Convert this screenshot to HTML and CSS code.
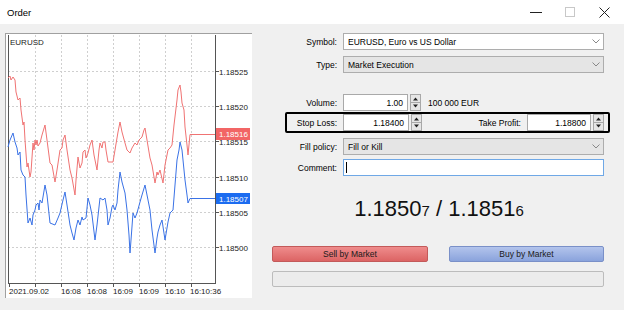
FILE: index.html
```html
<!DOCTYPE html>
<html lang="en">
<head>
    <meta charset="UTF-8">
    <title>Order</title>
    <link rel="stylesheet" href="styles.css">
</head>
<body>
    <div class="window">
        <div class="titlebar">
            <span class="title">Order</span>
            <div class="controls">
                <div class="ctl"><svg width="12" height="10" viewBox="0 0 12 10"><line x1="0" y1="5.5" x2="12" y2="5.5" stroke="#222" stroke-width="1"/></svg></div>
                <div class="ctl"><svg width="10" height="10" viewBox="0 0 10 10"><rect x="0.5" y="0.5" width="9" height="9" fill="none" stroke="#c8c8c8"/></svg></div>
                <div class="ctl"><svg width="11" height="11" viewBox="0 0 11 11"><path d="M0.5 0.5 L10.5 10.5 M10.5 0.5 L0.5 10.5" stroke="#222" stroke-width="1"/></svg></div>
            </div>
        </div>

        <div class="content">
            <!-- price chart -->
            <div class="chart">
                <svg width="246" height="264" viewBox="6 34 246 264">
                    <rect x="6" y="34" width="246" height="264" fill="#fff"/>
                    <g stroke="#cfcfcf" stroke-width="1" stroke-dasharray="2,2">
                        <line x1="35.5" y1="35" x2="35.5" y2="283"/>
                        <line x1="61.5" y1="35" x2="61.5" y2="283"/>
                        <line x1="87.5" y1="35" x2="87.5" y2="283"/>
                        <line x1="113.5" y1="35" x2="113.5" y2="283"/>
                        <line x1="139.5" y1="35" x2="139.5" y2="283"/>
                        <line x1="165.5" y1="35" x2="165.5" y2="283"/>
                        <line x1="191.5" y1="35" x2="191.5" y2="283"/>
                        <line x1="8" y1="71.5" x2="215" y2="71.5"/>
                        <line x1="8" y1="106.5" x2="215" y2="106.5"/>
                        <line x1="8" y1="141.5" x2="215" y2="141.5"/>
                        <line x1="8" y1="177.5" x2="215" y2="177.5"/>
                        <line x1="8" y1="212.5" x2="215" y2="212.5"/>
                        <line x1="8" y1="247.5" x2="215" y2="247.5"/>
                    </g>
                    <g stroke="#555" stroke-width="1">
                        <line x1="8.5" y1="35" x2="8.5" y2="284"/>
                        <line x1="215.5" y1="35" x2="215.5" y2="284"/>
                        <line x1="8" y1="283.5" x2="216" y2="283.5"/>
                        <line x1="9.5" y1="283" x2="9.5" y2="287"/>
                        <line x1="35.5" y1="283" x2="35.5" y2="287"/>
                        <line x1="61.5" y1="283" x2="61.5" y2="287"/>
                        <line x1="87.5" y1="283" x2="87.5" y2="287"/>
                        <line x1="113.5" y1="283" x2="113.5" y2="287"/>
                        <line x1="139.5" y1="283" x2="139.5" y2="287"/>
                        <line x1="165.5" y1="283" x2="165.5" y2="287"/>
                        <line x1="191.5" y1="283" x2="191.5" y2="287"/>
                        <line x1="215" y1="71.5" x2="219" y2="71.5"/>
                        <line x1="215" y1="106.5" x2="219" y2="106.5"/>
                        <line x1="215" y1="141.5" x2="219" y2="141.5"/>
                        <line x1="215" y1="177.5" x2="219" y2="177.5"/>
                        <line x1="215" y1="212.5" x2="219" y2="212.5"/>
                        <line x1="215" y1="247.5" x2="219" y2="247.5"/>
                    </g>
                    <polyline fill="none" stroke="#f07373" stroke-width="1" points="8,78 10,76 11,80 13,77 15,80 16,92 18,100 20,98 21,110 23,125 24,122 25,140 27,167 28,163 30,177 31,172 33,143 34,150 35,140 36,145 37,140 38,146 40,143 42,135 45,125 47,140 50,163 52,165 55,182 57,170 60,150 62,148 63,140 65,135 67,150 70,170 72,178 75,195 76,180 78,157 80,168 82,163 83,152 85,150 86,158 88,153 90,145 92,140 94,155 97,170 99,150 100,143 102,148 103,142 105,142 106,150 108,162 113,162 115,150 118,132 120,122 122,132 125,143 127,150 130,153 132,148 135,143 137,145 139,140 142,137 144,130 145,128 147,140 150,158 152,165 155,183 157,172 158,175 160,170 163,183 165,165 168,150 170,148 172,145 174,125 177,100 178,90 180,85 181,92 182,103 184,110 185,127 187,145 188,155 190,134.5 215,134.5"/>
                    <polyline fill="none" stroke="#3a72e6" stroke-width="1" points="8,147 10,140 13,133 15,142 17,148 18,155 20,152 21,170 23,175 25,177 26,195 28,223 30,218 32,225 33,215 35,210 36,205 38,203 39,210 40,200 42,203 45,185 47,195 50,223 55,225 58,218 60,213 63,200 65,192 67,205 70,225 72,233 74,240 76,228 78,220 80,225 82,217 83,220 86,218 88,198 90,205 92,215 95,240 97,225 100,198 103,200 105,198 107,210 108,225 110,218 112,207 113,205 115,210 117,203 118,190 120,172 122,182 125,193 127,210 129,235 130,253 131,240 133,213 135,218 137,213 140,202 142,195 145,185 148,200 150,210 152,230 155,253 157,238 158,232 160,225 162,220 165,240 168,222 170,213 173,210 175,185 177,160 179,150 180,142 182,150 184,170 185,180 187,195 188,203 190,198.5 215,198.5"/>
                    <g class="axis-text">
                        <text x="10" y="45">EURUSD</text>
                        <text x="219" y="74.5">1.18525</text>
                        <text x="219" y="109.5">1.18520</text>
                        <text x="219" y="144.5">1.18515</text>
                        <text x="219" y="180.5">1.18510</text>
                        <text x="219" y="215.5">1.18505</text>
                        <text x="219" y="250.5">1.18500</text>
                        <text x="9" y="294">2021.09.02</text>
                        <text x="61" y="294">16:08</text>
                        <text x="87" y="294">16:08</text>
                        <text x="113" y="294">16:09</text>
                        <text x="139" y="294">16:09</text>
                        <text x="165" y="294">16:10</text>
                        <text x="190" y="294">16:10:36</text>
                    </g>
                    <rect x="216" y="128" width="34" height="12" fill="#f26565"/>
                    <text class="tag" x="219" y="137">1.18516</text>
                    <rect x="216" y="193" width="34" height="11" fill="#1c6cf0"/>
                    <text class="tag" x="219" y="201.5">1.18507</text>
                </svg>
            </div>

            <!-- order form -->
            <div class="form">
                <div class="row row-symbol">
                    <label class="lbl">Symbol:</label>
                    <div class="combo">
                        <span>EURUSD, Euro vs US Dollar</span>
                        <svg class="chev" width="8" height="5" viewBox="0 0 8 5"><polyline points="0.5,0.5 4,4 7.5,0.5" fill="none" stroke="#888"/></svg>
                    </div>
                </div>
                <div class="row row-type">
                    <label class="lbl">Type:</label>
                    <div class="combo grey">
                        <span>Market Execution</span>
                        <svg class="chev" width="8" height="5" viewBox="0 0 8 5"><polyline points="0.5,0.5 4,4 7.5,0.5" fill="none" stroke="#888"/></svg>
                    </div>
                </div>
                <div class="row row-volume">
                    <label class="lbl">Volume:</label>
                    <div class="edit vol">1.00</div>
                    <svg class="spin" width="11" height="17" viewBox="0 0 11 17"><rect x="0.5" y="0.5" width="10" height="16" fill="#e6e6e6" stroke="#a8a8a8"/><line x1="1" y1="8.5" x2="10" y2="8.5" stroke="#a8a8a8"/><path d="M3 6.5 L5.5 3.5 L8 6.5 Z M3 10.5 L5.5 13.5 L8 10.5 Z" fill="#222"/></svg>
                    <span class="unit">100 000 EUR</span>
                </div>
                <div class="row row-stops">
                    <label class="lbl sl">Stop Loss:</label>
                    <div class="edit sl-edit">1.18400</div>
                    <svg class="spin" width="11" height="17" viewBox="0 0 11 17"><rect x="0.5" y="0.5" width="10" height="16" fill="#e6e6e6" stroke="#a8a8a8"/><line x1="1" y1="8.5" x2="10" y2="8.5" stroke="#a8a8a8"/><path d="M3 6.5 L5.5 3.5 L8 6.5 Z M3 10.5 L5.5 13.5 L8 10.5 Z" fill="#222"/></svg>
                    <label class="lbl tp">Take Profit:</label>
                    <div class="edit tp-edit">1.18800</div>
                    <svg class="spin" width="11" height="17" viewBox="0 0 11 17"><rect x="0.5" y="0.5" width="10" height="16" fill="#e6e6e6" stroke="#a8a8a8"/><line x1="1" y1="8.5" x2="10" y2="8.5" stroke="#a8a8a8"/><path d="M3 6.5 L5.5 3.5 L8 6.5 Z M3 10.5 L5.5 13.5 L8 10.5 Z" fill="#222"/></svg>
                </div>
                <div class="row row-fill">
                    <label class="lbl">Fill policy:</label>
                    <div class="combo grey">
                        <span>Fill or Kill</span>
                        <svg class="chev" width="8" height="5" viewBox="0 0 8 5"><polyline points="0.5,0.5 4,4 7.5,0.5" fill="none" stroke="#888"/></svg>
                    </div>
                </div>
                <div class="row row-comment">
                    <label class="lbl">Comment:</label>
                    <div class="edit comment"><span class="caret"></span></div>
                </div>

                <div class="price">1.1850<small>7</small> / 1.1851<small>6</small></div>

                <div class="actions">
                    <button class="btn sell">Sell by Market</button>
                    <button class="btn buy">Buy by Market</button>
                </div>
                <div class="progress"></div>
            </div>
        </div>
    </div>
</body>
</html>
```

FILE: styles.css
```css
* {
    margin: 0;
    padding: 0;
    box-sizing: border-box;
}

body {
    width: 624px;
    height: 310px;
    overflow: hidden;
    background: #f0f0f0;
    font-family: 'Liberation Sans', Arial, sans-serif;
    font-size: 8.5px;
    color: #000;
}

.window {
    width: 624px;
    height: 310px;
}

/* title bar */
.titlebar {
    height: 24px;
    background: #fff;
    display: flex;
    align-items: center;
}

.title {
    font-size: 9.5px;
    margin-left: 7px;
}

.controls {
    margin-left: auto;
    margin-right: 3px;
    display: flex;
}

.ctl {
    width: 34px;
    height: 24px;
    display: flex;
    align-items: center;
    justify-content: center;
}

/* main area */
.content {
    display: flex;
    padding-top: 9px;
}

.chart {
    margin-left: 5px;
    width: 247px;
    height: 265px;
    border-top: 1px solid #a0a0a0;
    border-left: 1px solid #a0a0a0;
}

.chart svg {
    display: block;
}

.axis-text text {
    font-family: 'Liberation Sans', Arial, sans-serif;
    font-size: 8px;
    fill: #1a1a1a;
}

.tag {
    font-family: 'Liberation Sans', Arial, sans-serif;
    font-size: 8px;
    fill: #fff;
}

/* form */
.form {
    margin-left: 20px;
    width: 332px;
}

.row {
    display: flex;
    align-items: center;
    height: 17px;
}

.lbl {
    width: 65px;
    margin-right: 6px;
    text-align: right;
    flex-shrink: 0;
}

.row-type { margin-top: 6px; }
.row-volume { margin-top: 21px; }
.row-fill { margin-top: 5px; }
.row-comment { margin-top: 4px; }

.combo {
    flex: 1;
    height: 17px;
    border: 1px solid #adadad;
    background: #fff;
    display: flex;
    align-items: center;
    padding-left: 4px;
}

.combo.grey {
    background: #e5e5e5;
}

.chev {
    margin-left: auto;
    margin-right: 3px;
}

.edit {
    height: 17px;
    border: 1px solid #a9a9a9;
    background: #fff;
    display: flex;
    align-items: center;
    justify-content: flex-end;
    padding-right: 4px;
}

.vol { width: 65px; }

.spin {
    display: block;
    margin-left: 2px;
    flex-shrink: 0;
}

.unit {
    margin-left: 7px;
}

/* highlighted stop loss / take profit row */
.row-stops {
    height: 21px;
    margin-top: 1px;
    margin-left: 13px;
    margin-right: -6px;
    border: 2px solid #000;
    border-radius: 2px;
}

.lbl.sl {
    width: 50px;
}

.sl-edit { width: 66px; }

.lbl.tp {
    width: 99px;
    margin-right: 6px;
}

.tp-edit { width: 64px; }

.comment {
    flex: 1;
    border-color: #6fa8e6;
    justify-content: flex-start;
    padding-left: 2px;
}

.caret {
    width: 1px;
    height: 11px;
    background: #000;
}

/* quote */
.price {
    margin-top: 22px;
    height: 22px;
    line-height: 22px;
    text-align: center;
    font-size: 22px;
    color: #111;
    padding-left: 2px;
}

.price small {
    font-size: 15px;
}

.actions {
    margin-top: 26px;
    display: flex;
    justify-content: space-between;
}

.btn {
    width: 156px;
    height: 16px;
    border-radius: 2px;
    font-family: 'Liberation Sans', Arial, sans-serif;
    font-size: 8.5px;
    color: #1a1a1a;
    cursor: pointer;
}

.btn.sell {
    background: linear-gradient(#ef8c8c, #dc6464);
    border: 1px solid #c35a5a;
}

.btn.buy {
    width: 155px;
    background: linear-gradient(#b3c4ec, #8aa3dc);
    border: 1px solid #7a90c8;
}

.progress {
    margin-top: 9px;
    height: 16px;
    border: 1px solid #bcbcbc;
    border-radius: 2px;
    background: #ececec;
}
```
